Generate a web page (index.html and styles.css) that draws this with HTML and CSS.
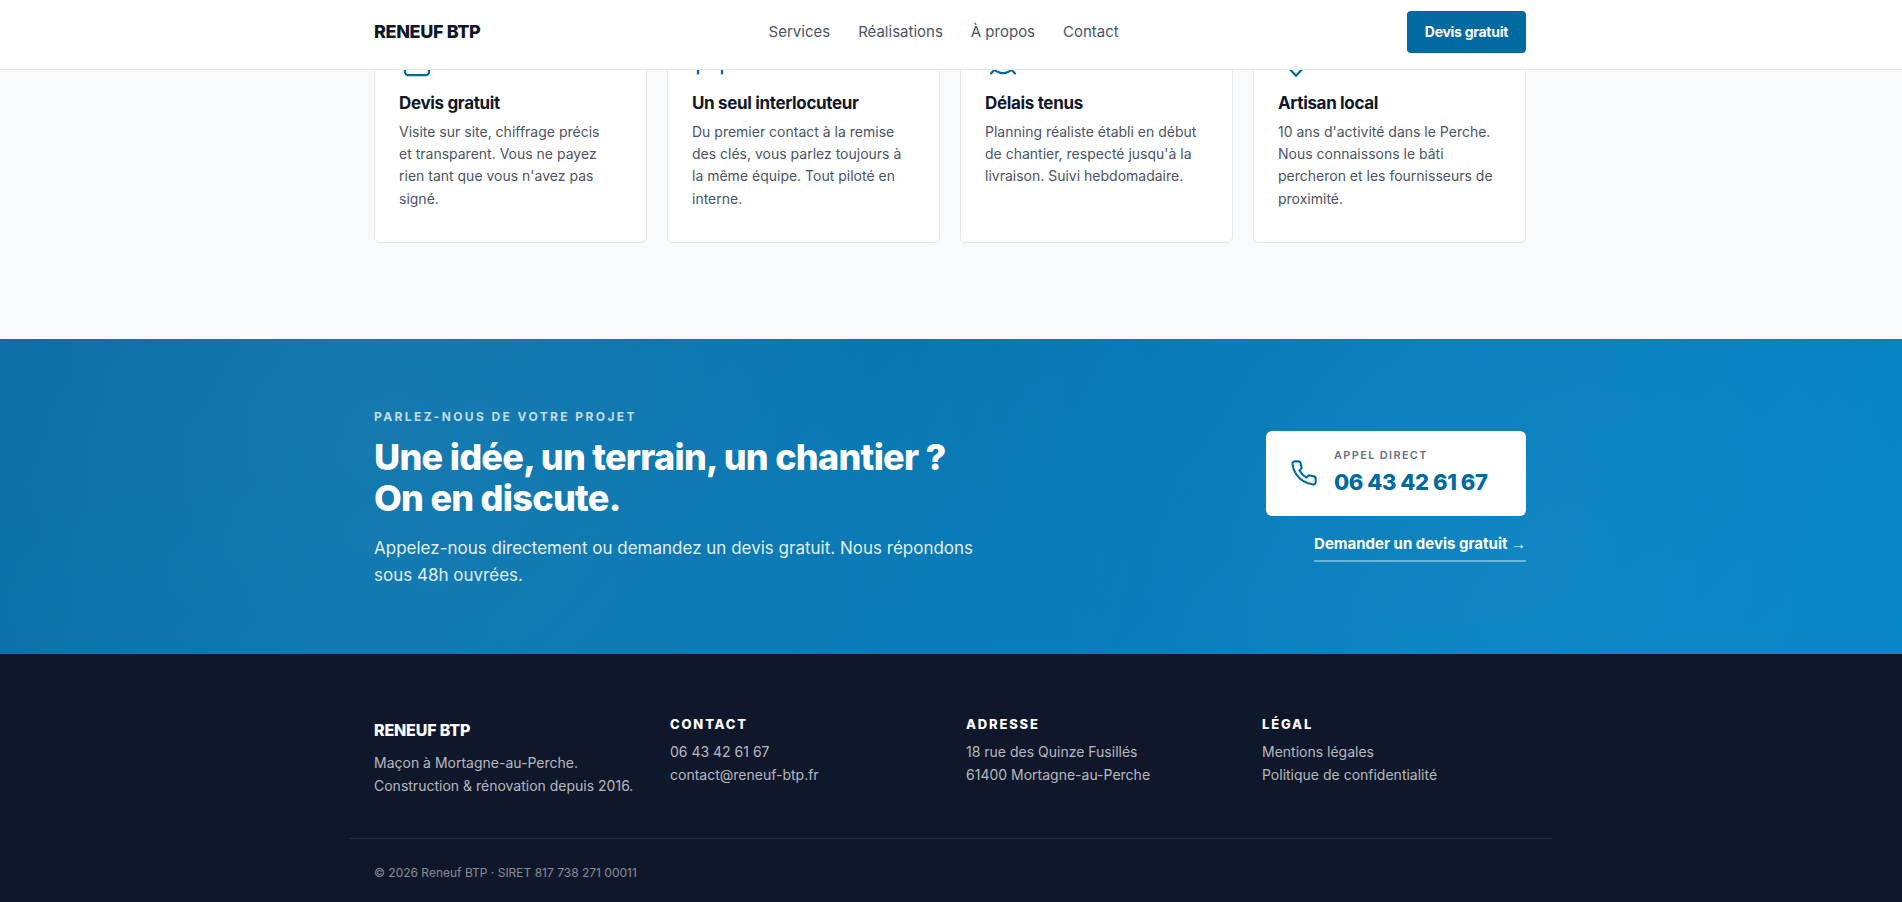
FILE: index.html
```html
<!DOCTYPE html>
<html lang="fr">
<head>
<meta charset="utf-8">
<meta name="viewport" content="width=device-width, initial-scale=1">
<title>Reneuf BTP</title>
<link rel="stylesheet" href="styles.css">
</head>
<body>
<header class="header">
  <div class="container header-inner">
    <a class="logo" href="#">RENEUF BTP</a>
    <nav class="nav">
      <a href="#services">Services</a>
      <a href="#realisations">Réalisations</a>
      <a href="#apropos">À propos</a>
      <a href="#contact">Contact</a>
    </nav>
    <a class="button" href="#devis">Devis gratuit</a>
  </div>
</header>
<main>
  <section class="reasons">
    <div class="container cards">
      <article class="card">
        <svg class="card-icon" viewBox="0 0 24 24" aria-hidden="true"><path d="M14 2H6a2 2 0 0 0-2 2v16a2 2 0 0 0 2 2h12a2 2 0 0 0 2-2V8z"/></svg>
        <h3>Devis gratuit</h3>
        <p>Visite sur site, chiffrage précis et transparent. Vous ne payez rien tant que vous n'avez pas signé.</p>
      </article>
      <article class="card">
        <svg class="card-icon" viewBox="0 0 24 24" aria-hidden="true"><path d="M20 21v-2a4 4 0 0 0-4-4H8a4 4 0 0 0-4 4v2"/><circle cx="12" cy="7" r="4"/></svg>
        <h3>Un seul interlocuteur</h3>
        <p>Du premier contact à la remise des clés, vous parlez toujours à la même équipe. Tout piloté en interne.</p>
      </article>
      <article class="card">
        <svg class="card-icon" viewBox="0 0 24 24" aria-hidden="true"><circle cx="12" cy="12" r="8.700"/><path d="M4 21l2.300-2.500M20 21l-2.300-2.500"/></svg>
        <h3>Délais tenus</h3>
        <p>Planning réaliste établi en début de chantier, respecté jusqu'à la livraison. Suivi hebdomadaire.</p>
      </article>
      <article class="card">
        <svg class="card-icon" viewBox="0 0 24 24" aria-hidden="true"><path d="M12 22.500l-7-7.500a9 9 0 1 1 14 0z"/><circle cx="12" cy="10" r="3"/></svg>
        <h3>Artisan local</h3>
        <p>10 ans d'activité dans le Perche. Nous connaissons le bâti percheron et les fournisseurs de proximité.</p>
      </article>
    </div>
  </section>
  <section class="cta">
    <div class="container cta-inner">
      <div class="cta-text">
        <p class="eyebrow">Parlez-nous de votre projet</p>
        <h2>Une idée, un terrain, un chantier ?<br>On en discute.</h2>
        <p class="lead">Appelez-nous directement ou demandez un devis gratuit. Nous répondons sous 48h ouvrées.</p>
      </div>
      <div class="cta-actions">
        <a class="phone" href="tel:0643426167">
          <svg class="phone-icon" viewBox="0 0 24 24" aria-hidden="true"><path d="M22 16.920v3a2 2 0 0 1-2.180 2 19.790 19.790 0 0 1-8.630-3.070 19.500 19.500 0 0 1-6-6 19.790 19.790 0 0 1-3.070-8.670A2 2 0 0 1 4.110 2h3a2 2 0 0 1 2 1.720c.127.960.361 1.903.7 2.810a2 2 0 0 1-.450 2.110L8.090 9.910a16 16 0 0 0 6 6l1.270-1.270a2 2 0 0 1 2.110-.450c.907.339 1.850.573 2.810.7A2 2 0 0 1 22 16.920z"/></svg>
          <span class="phone-text">
            <span class="phone-label">Appel direct</span>
            <span class="phone-number">06 43 42 61 67</span>
          </span>
        </a>
        <a class="quote" href="#devis">Demander un devis gratuit <span class="arrow">→</span></a>
      </div>
    </div>
  </section>
</main>
<footer class="footer">
  <div class="container footer-grid">
    <div>
      <p class="footer-logo">RENEUF BTP</p>
      <p>Maçon à Mortagne-au-Perche.<br>Construction &amp; rénovation depuis 2016.</p>
    </div>
    <div>
      <h4>Contact</h4>
      <a href="tel:0643426167">06 43 42 61 67</a>
      <a href="mailto:contact@reneuf-btp.fr">contact@reneuf-btp.fr</a>
    </div>
    <div>
      <h4>Adresse</h4>
      <p>18 rue des Quinze Fusillés<br>61400 Mortagne-au-Perche</p>
    </div>
    <div>
      <h4>Légal</h4>
      <a href="#mentions">Mentions légales</a>
      <a href="#confidentialite">Politique de confidentialité</a>
    </div>
  </div>
  <div class="container copyright">© 2026 Reneuf BTP · SIRET 817 738 271 00011</div>
</footer>
</body>
</html>
```
FILE: styles.css
```css
* {
  box-sizing: border-box;
  margin: 0;
  padding: 0;
}

body {
  background: #f9fafc;
  color: #0f172a;
  font-family: Inter, "Liberation Sans", sans-serif;
  font-size: 16px;
  line-height: 1.6;
}

a {
  color: inherit;
  text-decoration: none;
}

.container {
  width: 100%;
  max-width: 1202px;
  margin: 0 auto;
  padding: 0 26px 0 24px;
}

.header {
  position: sticky;
  top: 0;
  z-index: 10;
  background: #fff;
  border-bottom: 1px solid #e5e7eb;
}

.header-inner {
  display: flex;
  align-items: center;
  justify-content: space-between;
  padding-top: 11px;
  padding-bottom: 16px;
}

.logo {
  font-size: 18px;
  font-weight: 800;
  letter-spacing: -0.02em;
}

.nav {
  display: flex;
  gap: 28px;
  color: #4b5563;
  font-size: 15px;
  font-weight: 400;
}

.button {
  padding: 10px 18px;
  border-radius: 4px;
  background: #0369a1;
  color: #fff;
  font-size: 14px;
  font-weight: 700;
  letter-spacing: -0.02em;
}

.reasons {
  margin-top: -61px;
  padding-bottom: 96px;
}

.cards {
  display: grid;
  grid-template-columns: repeat(4, 1fr);
  gap: 20px;
}

.card {
  padding: 32px 24px;
  border: 1px solid #e5e7eb;
  border-radius: 6px;
  background: #fff;
}

.card-icon {
  display: block;
  width: 36px;
  height: 36px;
  margin-bottom: 12px;
  fill: none;
  stroke: #0369a1;
  stroke-width: 1.5;
  stroke-linecap: round;
  stroke-linejoin: round;
}

.card h3 {
  margin-bottom: 3px;
  font-size: 17px;
  font-weight: 700;
  letter-spacing: -0.02em;
}

.card p {
  max-width: 216px;
  color: #4b5563;
  font-size: 14px;
}

.cta {
  padding: 64px 0;
  background:
    radial-gradient(circle at 20% 30%, rgba(255, 255, 255, 0.08), transparent 52%),
    radial-gradient(circle at 80% 70%, rgba(255, 255, 255, 0.06), transparent 44%),
    linear-gradient(135deg, #0369a1, #0284c7);
  color: #fff;
}

.cta-inner {
  display: flex;
  align-items: center;
  justify-content: space-between;
  gap: 48px;
}

.cta-text {
  max-width: 620px;
}

.eyebrow {
  margin-bottom: 6px;
  color: rgba(255, 255, 255, 0.75);
  font-size: 12px;
  font-weight: 700;
  letter-spacing: 0.2em;
  line-height: 28px;
  text-transform: uppercase;
}

.cta h2 {
  margin-bottom: 16px;
  font-size: 36px;
  font-weight: 800;
  letter-spacing: -0.02em;
  line-height: 41px;
}

.lead {
  color: rgba(255, 255, 255, 0.9);
  font-size: 17px;
}

.cta-actions {
  display: flex;
  flex-direction: column;
  align-items: flex-end;
  gap: 16px;
}

.phone {
  display: flex;
  align-items: center;
  gap: 16px;
  min-width: 260px;
  padding: 16px 24px;
  border-radius: 6px;
  background: #fff;
  color: #0369a1;
}

.phone-icon {
  width: 28px;
  height: 28px;
  fill: none;
  stroke: currentColor;
  stroke-width: 1.8;
  stroke-linecap: round;
  stroke-linejoin: round;
}

.phone-text {
  display: flex;
  flex-direction: column;
}

.phone-label {
  color: #6b7280;
  font-size: 11px;
  font-weight: 600;
  letter-spacing: 0.12em;
  text-transform: uppercase;
}

.phone-number {
  font-size: 22px;
  font-weight: 800;
  letter-spacing: -0.02em;
}

.quote {
  padding-bottom: 4px;
  border-bottom: 2px solid rgba(255, 255, 255, 0.4);
  font-size: 15px;
  font-weight: 700;
}

.arrow {
  font-family: "Liberation Sans", sans-serif;
  font-size: 15px;
  font-weight: 700;
}

.footer {
  background: #0f172a;
  color: rgba(255, 255, 255, 0.7);
  font-size: 14px;
  line-height: 23px;
}

.footer-grid {
  display: grid;
  grid-template-columns: repeat(4, 1fr);
  gap: 32px;
  padding-top: 59px;
  padding-bottom: 41px;
}

.footer-grid a {
  display: block;
}

.footer-logo {
  margin: 6px 0 9px;
  color: #fff;
  font-size: 16px;
  font-weight: 800;
  letter-spacing: -0.01em;
}

.footer h4 {
  margin-bottom: 4px;
  color: #fff;
  font-size: 13px;
  font-weight: 800;
  letter-spacing: 0.14em;
  text-transform: uppercase;
}

.copyright {
  padding-top: 22px;
  padding-bottom: 20px;
  border-top: 1px solid rgba(255, 255, 255, 0.1);
  color: rgba(255, 255, 255, 0.5);
  font-size: 12px;
}
```
